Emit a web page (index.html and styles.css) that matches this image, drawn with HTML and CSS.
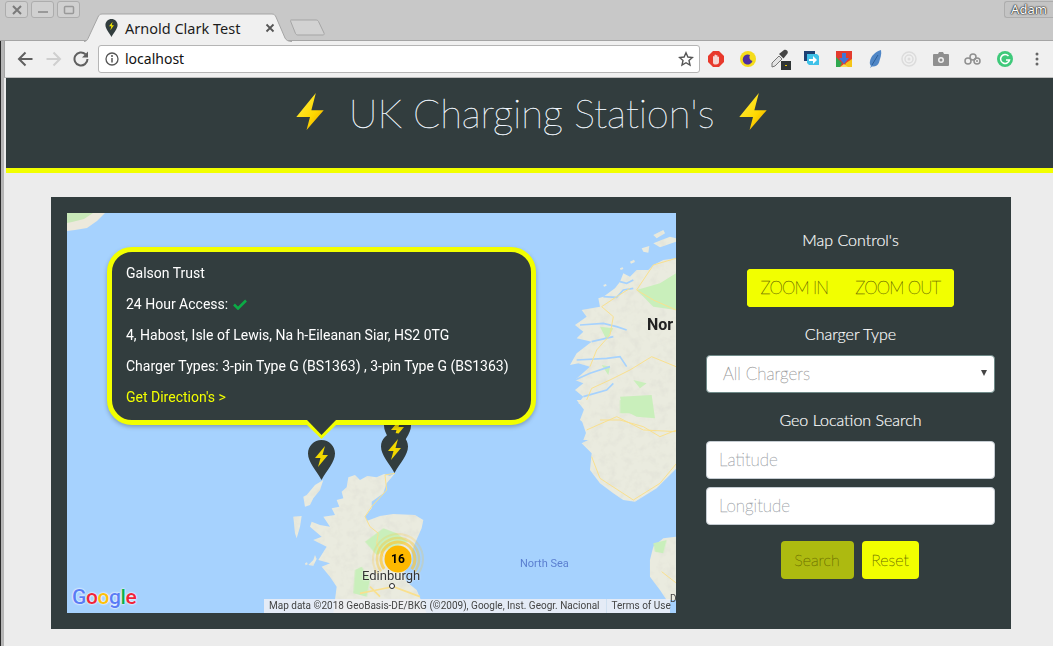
FILE: index.html
```html
<!DOCTYPE html>
<html lang="en">
<head>
<meta charset="utf-8">
<title>Arnold Clark Test</title>
<link rel="stylesheet" href="styles.css">
</head>
<body>
<div class="titlebar">
  <div class="winbtns">
    <span class="winbtn"><svg width="12" height="10" viewBox="0 0 12 10"><path d="M2 1l8 8M10 1l-8 8" stroke="#7a7a7a" stroke-width="2"/></svg></span>
    <span class="winbtn"><svg width="12" height="10" viewBox="0 0 12 10"><path d="M1 7h10" stroke="#999" stroke-width="2"/></svg></span>
    <span class="winbtn"><svg width="12" height="10" viewBox="0 0 12 10"><rect x="1.500" y="1.500" width="9" height="7" rx="1" fill="none" stroke="#999" stroke-width="1.500"/></svg></span>
  </div>
  <div class="tabs">
    <div class="tab">
      <svg class="tabshape" width="208" height="29" viewBox="0 0 208 29"><path d="M0 28.500c2 0 3-1 4-3L14 4c1-2 2-3 4-3h170c2 0 3 1 4 3l9 21c1 2 3 3.500 7 3.500" fill="#f0f0f0" stroke="#a5a5a5"/></svg>
      <svg class="favicon" width="13" height="18" viewBox="0 0 27 40"><path d="M13.500 0C6 0 0 6 0 13.500 0 22 8 30 13.500 40 19 30 27 22 27 13.500 27 6 21 0 13.500 0z" fill="#323d3e"/><path d="M16 6L8 16h5l-2 9 8-11h-5z" fill="#f2e600"/></svg>
      <span class="tabtitle">Arnold Clark Test</span>
      <svg class="tabclose" width="10" height="10" viewBox="0 0 10 10"><path d="M1.500 1.500l7 7M8.500 1.500l-7 7" stroke="#555" stroke-width="1.800"/></svg>
    </div>
    <svg class="newtab" width="35" height="17" viewBox="0 0 35 17"><path d="M1 1h25c1 0 2 .5 2.500 1.500L34 14c.5 1 0 2-1 2H8c-1 0-2-.5-2.500-1.500L.5 2C0 1.500.5 1 1 1z" fill="#d2d2d2" stroke="#a5a5a5"/></svg>
  </div>
  <span class="user">Adam</span>
</div>
<div class="toolbar">
  <svg class="navicon" width="18" height="16" viewBox="0 0 18 16"><path d="M16 8H3M9 1.500L2.500 8 9 14.500" fill="none" stroke="#5f5f5f" stroke-width="2"/></svg>
  <svg class="navicon" width="18" height="16" viewBox="0 0 18 16"><path d="M2 8h13M9 1.500L15.500 8 9 14.500" fill="none" stroke="#cfcfcf" stroke-width="2"/></svg>
  <svg class="navicon" width="18" height="16" viewBox="0 0 18 16"><path d="M15 8a6.500 6.500 0 1 1-2-4.700" fill="none" stroke="#5f5f5f" stroke-width="2"/><path d="M15.500 0.500v6h-6z" fill="#5f5f5f"/></svg>
  <div class="omnibox">
    <svg width="14" height="14" viewBox="0 0 14 14"><circle cx="7" cy="7" r="6" fill="none" stroke="#555" stroke-width="1.300"/><path d="M7 6v4.500" stroke="#555" stroke-width="1.500"/><circle cx="7" cy="4" r="1" fill="#555"/></svg>
    <span class="url">localhost</span>
    <svg class="star" width="16" height="16" viewBox="0 0 16 16"><path d="M8 1.800l1.900 4.200 4.500.5-3.400 3 1 4.500L8 11.700 4 14l1-4.500-3.400-3 4.500-.5z" fill="none" stroke="#555" stroke-width="1.400"/></svg>
  </div>
  <div class="exts">
    <svg width="16" height="16" viewBox="0 0 16 16"><path d="M5 0h6l5 5v6l-5 5H5l-5-5V5z" fill="#e8392c"/><path d="M5 12V5.500a1 1 0 0 1 1.500 0V4a1 1 0 0 1 1.500 0V4.500a1 1 0 0 1 1.500 0V6a1 1 0 0 1 1.500 0V11c0 1.500-1 2.500-3 2.500S5.500 13 5 12z" fill="#f4d6d2"/></svg>
    <svg width="16" height="16" viewBox="0 0 16 16"><circle cx="8" cy="8" r="8" fill="#f5dc1c"/><path d="M10 4a5 5 0 1 0 2.500 6A4 4 0 0 1 10 4z" fill="#4d2fa0"/></svg>
    <svg width="22" height="22" viewBox="0 0 22 22"><path d="M3 15L10 8l3 3-7 7-3 1z" fill="#e4e4e4" stroke="#777"/><path d="M10 6l5-4c1-.5 2-.5 3 .5s1 2 .5 3l-4 5z" fill="#444"/><rect x="12" y="13" width="10" height="9" fill="#2f3535"/><rect x="16" y="17" width="2" height="1" fill="#e6c000"/></svg>
    <svg width="16" height="16" viewBox="0 0 16 16"><path d="M0 0h11v3H3v7H0z" fill="#1c3f72"/><path d="M3 3h10l2 2v9H5l-2-2z" fill="#3fc1e8"/><path d="M5 8h4V5l4 4-4 4v-3H5z" fill="#fff"/></svg>
    <svg width="16" height="16" viewBox="0 0 16 16"><rect width="16" height="16" fill="#e33b2e"/><path d="M0 16V6l6 6-2 4z" fill="#2fa84f"/><path d="M16 16V8L10 12 8 16z" fill="#f5c518"/><path d="M4 16l4-3 4 3z" fill="#f5e05a"/><path d="M6 2h4v5h3l-5 6-5-6h3z" fill="#3f76d8"/></svg>
    <svg width="14" height="18" viewBox="0 0 14 18"><path d="M12 0C6 2 2 6 1 11c-.5 2 0 4 1 5L1 18l2-1.500c3 .5 6-1 7-4 1-4 3-8 2-12.500z" fill="#4f86c6"/><path d="M3 15L9 5" stroke="#2c5f9a"/></svg>
    <svg width="16" height="16" viewBox="0 0 16 16"><circle cx="8" cy="8" r="7" fill="none" stroke="#dcdcdc" stroke-width="1.500"/><circle cx="8" cy="8" r="4" fill="none" stroke="#dcdcdc" stroke-width="1.500"/><circle cx="8" cy="8" r="1.500" fill="#dcdcdc"/></svg>
    <svg width="16" height="14" viewBox="0 0 16 14"><path d="M1 2h4l1-2h4l1 2h4a1 1 0 0 1 1 1v10a1 1 0 0 1-1 1H1a1 1 0 0 1-1-1V3a1 1 0 0 1 1-1z" fill="#8f8f8f"/><circle cx="8" cy="8" r="3" fill="#f0f0f0"/><circle cx="8" cy="8" r="1.500" fill="#8f8f8f"/></svg>
    <svg width="17" height="12" viewBox="0 0 17 12"><circle cx="4" cy="8" r="3" fill="none" stroke="#8f8f8f" stroke-width="1.500"/><circle cx="9" cy="4" r="3" fill="none" stroke="#8f8f8f" stroke-width="1.500"/><circle cx="13" cy="8" r="3" fill="none" stroke="#8f8f8f" stroke-width="1.500"/><circle cx="13" cy="8" r="1" fill="#8f8f8f"/></svg>
    <svg width="16" height="16" viewBox="0 0 16 16"><circle cx="8" cy="8" r="8" fill="#3ec97a"/><path d="M11.500 5A4.500 4.500 0 1 0 12.500 9H9" fill="none" stroke="#fff" stroke-width="1.500"/></svg>
    <svg width="4" height="14" viewBox="0 0 4 14"><circle cx="2" cy="2" r="1.500" fill="#666"/><circle cx="2" cy="7" r="1.500" fill="#666"/><circle cx="2" cy="12" r="1.500" fill="#666"/></svg>
  </div>
</div>
<div class="page">
  <header class="hero">
    <svg class="bolt" width="28" height="37" viewBox="0 0 80 108"><defs><linearGradient id="bg" x1="0" y1="0" x2="1" y2="1"><stop offset="0" stop-color="#fff14a"/><stop offset=".6" stop-color="#ffd800"/><stop offset="1" stop-color="#e89a00"/></linearGradient></defs><path d="M57 0L0 70h40l-10 38 50-58H44z" fill="url(#bg)"/></svg>
    <h1 class="title">UK Charging Station's</h1>
    <svg class="bolt" width="28" height="37" viewBox="0 0 80 108"><path d="M57 0L0 70h40l-10 38 50-58H44z" fill="url(#bg)"/></svg>
  </header>
  <main class="panel">
    <div class="map">
      <svg class="mapart" width="609" height="400" viewBox="0 0 609 400">
        <defs>
          <filter id="hill" x="0" y="0" width="100%" height="100%"><feTurbulence type="fractalNoise" baseFrequency=".12" numOctaves="3" seed="4"/><feColorMatrix values="0 0 0 0 .7  0 0 0 0 .7  0 0 0 0 .64  1.100 0 0 0 -.5"/><feComposite in2="SourceAlpha" operator="in" result="n"/><feMerge><feMergeNode in="SourceGraphic"/><feMergeNode in="n"/></feMerge></filter>
        </defs>
        <rect width="609" height="400" fill="#a6d2fe"/>
        <path d="M0 0h38l-8 8-10 7-12 2-8 1z" fill="#ece9dc"/>
        <path d="M0 0h26l-9 6-12 3-5 1z" fill="#c8e8b8"/>
        <g filter="url(#hill)">
          <g fill="#eaebdf" transform="translate(213 187) scale(.3333)">
            <path d="M345 220L330 228 312 222 290 232 262 228 240 240 225 225 205 232 200 262 185 275 190 295 170 300 178 320 155 325 165 345 130 350 150 380 120 375 95 365 90 380 125 410 100 420 140 440 115 480 150 490 125 500 150 530 170 560 160 640H440L410 570 380 545 370 520 395 490 395 455 405 430 425 385 430 360 405 345 340 342 300 348 262 362 255 350 275 325 275 305 310 280 320 250z"/>
            <path d="M130 240L105 255 80 285 70 290 75 320 90 315 100 295 120 270z"/>
            <path d="M40 350L65 348 60 380 50 415 45 400zM85 495L100 480 105 465 110 477 100 497zM75 490L81 487 83 493 77 496z"/>
            <path d="M890 0L920 40 905 60 925 120 905 130 935 160 930 210 960 250 1000 280 1030 300 1065 305 1130 265 1190 205V0zM1188 410L1150 415 1120 440 1110 480V530L1140 570 1160 600H1188z"/>
          </g>
          <g fill="#eaebdf" transform="translate(453 -3) scale(.3333)">
            <path d="M468 145l-38 5-30 15-15 15h-35l-20 20-20-10-10 25-15 20-35 25-15 5 5 25-55 10 15 20-35 25 25 20-20 20 45 10-45 35-20 35 25-5 35 10-45 40 25 10-25 20 25 20-15 20 20 10-15 40 25 20-15 40h278z"/>
            <path d="M400 75l30-15 5 10-25 15zM400 100l50-20 18 5v10l-48 17zM365 115l23-7-3 20-15-3zM330 155l12-6 3 7-12 5zM300 175l8-3 2 5-8 3zM250 225l8-3 2 5-8 3z"/>
          </g>
        </g>
        <g fill="#c9efbb" transform="translate(213 187) scale(.3333)">
          <path d="M310 385l-55 40 35 40 40-20 55-20-35-25z"/>
          <path d="M225 510l-5 70 40 10 10-50-25-40z"/>
          <path d="M1020 40h70l10-30-80-10zM1120 430l40-10-10 40-25-5z"/>
        </g>
        <g fill="#c9efbb" transform="translate(453 -3) scale(.3333)">
          <path d="M350 240l50 50 68 10V190l-48 30z"/>
          <path d="M300 560l95-5 10 70-55-5-40-20z"/>
          <path d="M240 350l40 5-20 35zM340 510l40 10-20 15zM245 465l25 5-5 25z"/>
        </g>
        <g fill="none" stroke="#a6d2fe" stroke-width="5" transform="translate(453 -3) scale(.3333)">
          <path d="M250 260l40 2 20-22 30-5M180 345l70-5 40 10M215 395l65-15M170 450l90-5 40-5 20 30M165 510l45-20 60-20M190 560l70-20 20-20M300 215l20 5 20-10M290 350l30 10"/>
        </g>
        <g fill="none" stroke="#f9e08e" stroke-width="3" transform="translate(453 -3) scale(.3333)">
          <path d="M468 145l-68 20-50 75 50 30 68 30M468 470l-73-30-65 40-60 30-55 25-15 35M210 470l20-50 40-45 10-55-35-30 45-30 40-25M200 660l90-40 80 40 98 5"/>
        </g>
        <g fill="none" stroke="#f9e08e" stroke-width="3" transform="translate(213 187) scale(.3333)">
          <path d="M935 170l25 65 100 65 80-50 50-60M960 60h60l70 20 50 30 50-20M1145 515l45 35M345 220l-30 5 5 45-45 50-20 30 15 30 25 20-5 30 20 40"/>
          <path d="M240 580l50-10 50-10 80 30M270 560l30 30" stroke-width="5"/>
        </g>
      </svg>
      <span class="label label-nor">Nor</span>
      <span class="label label-sea">North Sea</span>
      <span class="label label-edin">Edinburgh</span>
      <span class="label label-d">D</span>
      <span class="citydot"></span>

      <svg class="pin pin-c" width="27" height="40" viewBox="0 0 27 40"><use href="#pinshape"/></svg>
      <svg class="pin pin-b" width="27" height="40" viewBox="0 0 27 40"><defs><g id="pinshape"><path d="M13.500 0C6 0 0 6 0 13.500 0 22 8 30 13.500 40 19 30 27 22 27 13.500 27 6 21 0 13.500 0z" fill="#323d3e"/><path d="M17 6L7 18h5.500L10 27l10-12h-5.500z" fill="#f2d900"/></g></defs><use href="#pinshape"/></svg>
      <svg class="pin pin-a" width="27" height="40" viewBox="0 0 27 40"><use href="#pinshape"/></svg>

      <svg class="cluster" width="52" height="52" viewBox="0 0 52 52"><g fill="none" stroke="#fdc62e" transform="rotate(144 26 26)"><circle cx="26" cy="26" r="17" stroke-width="3" opacity=".65" pathLength="100" stroke-dasharray="70 30"/><circle cx="26" cy="26" r="21" stroke-width="2.500" opacity=".4" pathLength="100" stroke-dasharray="70 30"/><circle cx="26" cy="26" r="25" stroke-width="2" opacity=".22" pathLength="100" stroke-dasharray="70 30"/></g><circle cx="26" cy="26" r="13.500" fill="#fdb800"/></svg>
      <span class="clustertext">16</span>

      <div class="popup">
        <p class="popline">Galson Trust</p>
        <p class="popline">24 Hour Access: <svg class="tick" width="14" height="11" viewBox="0 0 14 11"><path d="M1 5.500l4 4 8-8" fill="none" stroke="#0bab45" stroke-width="2.600"/></svg></p>
        <p class="popline">4, Habost, Isle of Lewis, Na h-Eileanan Siar, HS2 0TG</p>
        <p class="popline">Charger Types: 3-pin Type G (BS1363) , 3-pin Type G (BS1363)</p>
        <a class="popline poplink">Get Direction's &gt;</a>
        <svg class="poptail" width="33" height="22" viewBox="0 0 33 22"><path d="M2 7L16.500 21 31 7z" fill="#f2ff00"/><path d="M2 2L16.500 17 31 2z" fill="#323d3e"/></svg>
      </div>

      <span class="google"><span class="gb">G</span><span class="gr">o</span><span class="gy">o</span><span class="gb">g</span><span class="gg">l</span><span class="gr">e</span></span>
      <div class="attrib"><span>Map data ©2018 GeoBasis-DE/BKG (©2009), Google, Inst. Geogr. Nacional</span><span class="terms">Terms of Use</span></div>
    </div>
    <aside class="side">
      <h2 class="head head-first">Map Control's</h2>
      <div class="zoomgroup">
        <button class="yb zoombtn">ZOOM IN</button>
        <button class="yb zoombtn">ZOOM OUT</button>
      </div>
      <h2 class="head">Charger Type</h2>
      <div class="selectbox"><span>All Chargers</span><span class="caret"></span></div>
      <h2 class="head">Geo Location Search</h2>
      <input class="field" placeholder="Latitude">
      <input class="field" placeholder="Longitude">
      <div class="actions">
        <button class="yb act act-dim">Search</button>
        <button class="yb act">Reset</button>
      </div>
    </aside>
  </main>
</div>
</body>
</html>
```
FILE: styles.css
```css
* { box-sizing: border-box; }
html, body { margin: 0; height: 646px; overflow: hidden; }
body { background: linear-gradient(to right, #2a2a2a 0 1px, #b5b5b5 1px 4px, #ececec 4px); font-family: "Lato", "Liberation Sans", sans-serif; }

.titlebar { height: 41px; background: #c8c8c8; display: flex; align-items: flex-start; position: relative; border-bottom: 1px solid #a5a5a5; }
.winbtns { display: flex; gap: 3px; padding: 1px 0 0 5px; width: 84px; flex: none; }
.winbtn { width: 23px; height: 17px; display: flex; align-items: center; justify-content: center; border: 1px solid #adadad; border-radius: 3px; background: #d0d0d0; }
.tabs { display: flex; align-items: flex-end; height: 41px; flex: 1; }
.tab { position: relative; width: 208px; height: 29px; display: flex; align-items: center; padding: 0 17px 0 21px; margin-bottom: -1px; flex: none; }
.tabshape { position: absolute; left: 0; top: 0; }
.favicon { position: relative; margin-right: 7px; }
.tabtitle { position: relative; flex: 1; font: 14.500px "Noto Sans", sans-serif; color: #1c1c1c; white-space: nowrap; }
.tabclose { position: relative; }
.newtab { margin: 0 0 5px -2px; }
.user { width: 49px; height: 17px; margin-top: 1px; border: 1px solid #adadad; border-right: 0; border-radius: 3px 0 0 3px; background: #c4c4c4; color: #fff; font: 13px/15px "Noto Sans", sans-serif; text-align: center; text-shadow: 0 0 2px #222, 0 0 1px #222, 0 0 1px #222; }

.toolbar { height: 37px; margin-left: 4px; background: #f0f0f0; display: flex; align-items: center; padding: 0 0 1px 11px; gap: 9px; border-left: 1px solid #a5a5a5; border-bottom: 1px solid #bdbdbd; }
.navicon { flex: none; width: 19px; }
.omnibox { width: 602px; height: 28px; margin-left: -2px; background: #fff; border: 1px solid #b5b5b5; border-radius: 3px; display: flex; align-items: center; padding: 0 5px 0 6px; flex: none; }
.url { flex: 1; margin-left: 6px; font: 14px "Noto Sans", sans-serif; color: #111; }
.exts { width: 353px; margin-left: -9px; display: grid; grid-template-columns: repeat(11, 1fr); align-items: center; justify-items: center; }

.page { margin-left: 6px; height: 568px; }
.hero { height: 95px; background: #323d3e; border-bottom: 5px solid #f2ff00; display: flex; justify-content: center; align-items: flex-start; padding: 15px 0 0 4px; gap: 25px; }
.bolt { flex: none; }
.title { margin: 0; font-family: "Lato", sans-serif; font-weight: 100; font-size: 40px; letter-spacing: -.15px; line-height: 41px; color: #fff; white-space: nowrap; -webkit-text-stroke: .35px #eef6ff; }

.panel { width: 960px; height: 432px; margin: 24px 0 0 45px; background: #323d3e; padding: 16px; display: flex; }
.map { position: relative; width: 609px; height: 400px; overflow: hidden; flex: none; background: #a6d2fe; font-family: Roboto, sans-serif; }
.mapart { position: absolute; inset: 0; }
.label { position: absolute; white-space: nowrap; }
.label-nor { left: 580px; top: 102px; font: 700 16px Roboto, sans-serif; color: #222; }
.label-sea { left: 453px; top: 344px; font-size: 11px; color: #5b7fd0; }
.label-edin { left: 295px; top: 355px; font-size: 13px; color: #333; text-shadow: 0 0 2px #fff; }
.label-d { left: 603px; top: 380px; font-size: 10px; color: #444; }
.citydot { position: absolute; left: 322px; top: 370px; width: 6px; height: 6px; border-radius: 50%; background: #fff; border: 1.500px solid #222; }
.pin { position: absolute; }
.pin-a { left: 241px; top: 227px; }
.pin-b { left: 314px; top: 220px; }
.pin-c { left: 317px; top: 199px; }
.cluster { position: absolute; left: 305px; top: 320px; }
.clustertext { position: absolute; left: 305px; top: 320px; width: 52px; text-align: center; font: 700 12px/52px Roboto, sans-serif; color: #000; }
.popup { position: absolute; left: 40px; top: 34px; width: 429px; height: 178px; border: 5px solid #f2ff00; border-radius: 25px; background: #323d3e; padding: 6px 14px; display: flex; flex-direction: column; box-shadow: 0 2px 4px rgba(0,0,0,.25); color: #fff; }
.popline { margin: 0; height: 31px; line-height: 31px; font-size: 14px; white-space: nowrap; }
.poplink { color: #f2ff00; }
.tick { margin-left: 1px; vertical-align: -1px; }
.poptail { position: absolute; left: 193px; top: 166px; }
.google { position: absolute; left: 5px; top: 372px; font: 500 21px Roboto, sans-serif; letter-spacing: -.4px; text-shadow: 0 0 2px #fff, 0 0 2px #fff; }
.gb { color: #5a7df5; } .gr { color: #f0243a; } .gy { color: #fcc10a; } .gg { color: #0db04b; }
.attrib { position: absolute; right: 6px; bottom: 0; height: 14px; width: 406px; background: rgba(238,240,245,.85); font-size: 10px; line-height: 14px; color: #444; display: flex; padding-left: 5px; white-space: nowrap; }
.terms { margin-left: 6px; padding-left: 5px; border-left: 1px solid #cfe0f0; }

.side { flex: 1; display: flex; flex-direction: column; align-items: center; padding: 0 0 0 30px; }
.head { margin: 16px 0 2px; font-family: "Lato", sans-serif; font-weight: 300; font-size: 16px; line-height: 22px; color: #fff; white-space: nowrap; -webkit-text-stroke: .15px #fff; }
.zoomgroup { display: flex; width: 207px; height: 38px; margin-top: 16px; border-radius: 4px; background: #f2ff00; }
.yb { border: 0; background: #f2ff00; color: #5f6200; font-family: "Lato", sans-serif; font-weight: 100; font-size: 17px; border-radius: 4px; padding: 0 0 2px; -webkit-text-stroke: .3px #6d7000; }
.zoombtn { flex: 1 1 auto; letter-spacing: -.8px; padding: 0 12px 2px; white-space: nowrap; }
.selectbox { width: 289px; height: 38px; margin-top: 8px; background: #fff; border: 1px solid #6f8a88; border-radius: 4px; display: flex; align-items: center; justify-content: space-between; padding: 0 7px 2px 16px; color: #8c8c8c; font-weight: 100; font-size: 17px; -webkit-text-stroke: .3px #9a9a9a; }
.caret { width: 0; height: 0; border: 3.500px solid transparent; border-top: 6px solid #444; border-bottom: 0; }
.field { width: 289px; height: 38px; margin: 8px 0 0; flex: none; border: 1px solid #c5ccd2; border-radius: 4px; background: #fff; padding: 0 12px 2px; font-family: "Lato", sans-serif; font-weight: 100; font-size: 17px; -webkit-text-stroke: .3px #a0a5aa; }
.field::placeholder { color: #8a8f95; opacity: 1; }
.actions { display: flex; gap: 8px; margin: 16px 2px 0 0; }
.act { height: 38px; width: 57px; font-size: 16px; }
.act-dim { width: 73px; background: #adba10; color: #5f6500; }
```
